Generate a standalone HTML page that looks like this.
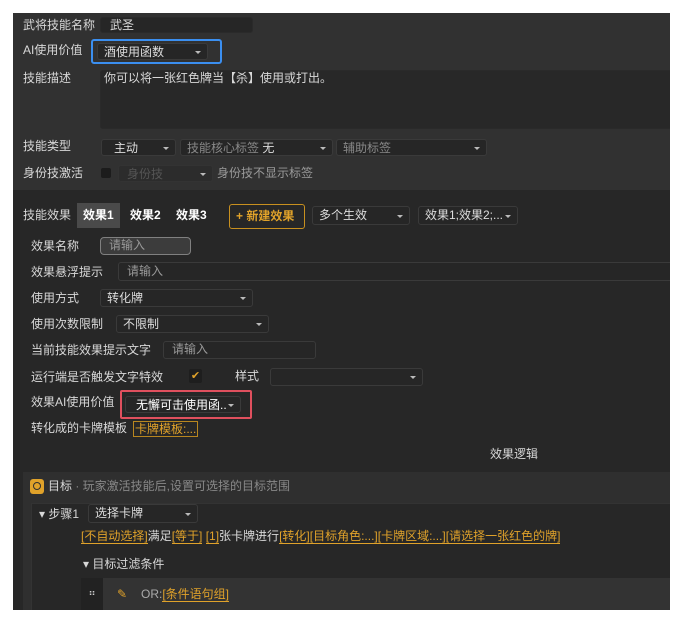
<!DOCTYPE html>
<html><head><meta charset="utf-8"><style>
*{margin:0;padding:0;box-sizing:border-box}
body{width:683px;height:623px;background:#fff;position:relative;overflow:hidden;font-family:"Liberation Sans","Noto Sans CJK SC",sans-serif;font-size:12px;color:#d8d8d8}
#w{position:absolute;left:0;top:0;width:683px;height:623px;clip-path:inset(13px 13px 13px 13px)}
.a{position:absolute;white-space:nowrap}
.l{line-height:14px}
.in{position:absolute;background:#262626;border:1px solid #3a3a3a;border-radius:3px}
.sel{position:absolute;background:#262626;border:1px solid #3a3a3a;border-radius:3px;color:#ddd;padding-left:6px;line-height:16px;white-space:nowrap}
.sel:after{content:"";position:absolute;right:6px;top:50%;margin-top:-1px;border-left:3px solid transparent;border-right:3px solid transparent;border-top:3px solid #bbb}
.g{color:#e0a22a}
.gb{color:#e0a22a;border-bottom:1px solid #e0a22a}
.dim{color:#888}
</style></head><body><div id="w">
<div class="a" style="left:13px;top:13px;width:657px;height:177px;background:#313131"></div>
<div class="a" style="left:13px;top:190px;width:657px;height:420px;background:#272727"></div>

<div class="a l" style="left:23px;top:18px">武将技能名称</div>
<div class="in" style="left:100px;top:17px;width:153px;height:16px;border-color:#2a2a2a"></div>
<div class="a l" style="left:110px;top:18px">武圣</div>

<div class="a l" style="left:23px;top:43px">AI使用价值</div>
<div class="a" style="left:91px;top:39px;width:131px;height:25px;border:2px solid #3b8ff0;border-radius:3px"></div>
<div class="sel" style="left:97px;top:43px;width:111px;height:17px">酒使用函数</div>

<div class="a l" style="left:23px;top:71px">技能描述</div>
<div class="in" style="left:100px;top:70px;width:575px;height:59px;border-color:#2a2a2a;background:#282828"></div>
<div class="a l" style="left:104px;top:71px">你可以将一张红色牌当【杀】使用或打出。</div>

<div class="a l" style="left:23px;top:139px">技能类型</div>
<div class="sel" style="left:101px;top:139px;width:75px;height:17px;padding-left:12px">主动</div>
<div class="sel" style="left:180px;top:139px;width:153px;height:17px"><span class="dim">技能核心标签</span> 无</div>
<div class="sel" style="left:336px;top:139px;width:151px;height:17px"><span class="dim">辅助标签</span></div>

<div class="a l" style="left:23px;top:166px">身份技激活</div>
<div class="a" style="left:101px;top:168px;width:10px;height:10px;background:#1c1c1c;border-radius:2px"></div>
<div class="sel" style="left:118px;top:165px;width:95px;height:17px;color:#555;background:#2c2c2c;border-color:#333;padding-left:8px">身份技</div>
<div class="a l" style="left:217px;top:166px;color:#999">身份技不显示标签</div>

<div class="a l" style="left:23px;top:208px">技能效果</div>
<div class="a" style="left:77px;top:203px;width:43px;height:25px;background:#4a4a4a"></div>
<div class="a l" style="left:83px;top:208px;color:#fff;font-weight:bold">效果1</div>
<div class="a l" style="left:130px;top:208px;color:#fff;font-weight:bold">效果2</div>
<div class="a l" style="left:176px;top:208px;color:#fff;font-weight:bold">效果3</div>
<div class="a" style="left:229px;top:204px;width:76px;height:25px;border:1px solid #c8901f;border-radius:3px;color:#e0a22a;line-height:22px;padding-left:6px;font-weight:bold">+ 新建效果</div>
<div class="sel" style="left:312px;top:206px;width:98px;height:19px;line-height:16px">多个生效</div>
<div class="sel" style="left:418px;top:206px;width:100px;height:19px;padding-left:6px;padding-right:12px;overflow:hidden">效果1;效果2;...</div>

<div class="a l" style="left:31px;top:239px">效果名称</div>
<div class="a" style="left:100px;top:237px;width:91px;height:18px;background:#3c3c3c;border:1px solid #808080;border-radius:4px;color:#999;padding-left:8px;line-height:15px">请输入</div>

<div class="a l" style="left:31px;top:265px">效果悬浮提示</div>
<div class="in" style="left:118px;top:262px;width:560px;height:19px;color:#999;padding-left:8px;line-height:16px">请输入</div>

<div class="a l" style="left:31px;top:291px">使用方式</div>
<div class="sel" style="left:100px;top:289px;width:153px;height:18px">转化牌</div>

<div class="a l" style="left:31px;top:317px">使用次数限制</div>
<div class="sel" style="left:116px;top:315px;width:153px;height:18px">不限制</div>

<div class="a l" style="left:31px;top:343px">当前技能效果提示文字</div>
<div class="in" style="left:163px;top:341px;width:153px;height:18px;color:#999;padding-left:8px;line-height:15px">请输入</div>

<div class="a l" style="left:31px;top:370px">运行端是否触发文字特效</div>
<div class="a" style="left:189px;top:369px;width:13px;height:14px;background:#1e1e1e;border-radius:2px;color:#e0a22a;font-size:11px;line-height:14px;text-align:center">✔</div>
<div class="a l" style="left:235px;top:369px">样式</div>
<div class="sel" style="left:270px;top:368px;width:153px;height:18px"></div>

<div class="a l" style="left:31px;top:395px">效果AI使用价值</div>
<div class="a" style="left:120px;top:390px;width:132px;height:29px;border:2px solid #e0505e;border-radius:2px"></div>
<div class="sel" style="left:125px;top:396px;width:116px;height:17px;padding-left:10px;color:#fff"><span style="display:inline-block;width:92px;overflow:hidden;vertical-align:top">无懈可击使用函..</span></div>

<div class="a l" style="left:31px;top:421px">转化成的卡牌模板</div>
<div class="a l gb" style="left:133px;top:421px;border:1px solid #b8861f;padding:0 1px">卡牌模板:...</div>

<div class="a l" style="left:490px;top:447px">效果逻辑</div>

<div class="a" style="left:23px;top:472px;width:650px;height:138px;background:#2f2f2f"></div>
<div class="a" style="left:30px;top:479px;width:14px;height:15px;background:#e0a22a;border-radius:3px"></div>
<div class="a" style="left:33px;top:482px;width:8px;height:8px;border:1.5px solid #2f2f2f;border-radius:50%"></div>
<div class="a l" style="left:48px;top:479px">目标 <span class="dim">· 玩家激活技能后,设置可选择的目标范围</span></div>
<div class="a" style="left:31px;top:503px;width:645px;height:110px;background:#272727;border:1px solid #333"></div>
<div class="a l" style="left:39px;top:507px">▾ 步骤1</div>
<div class="sel" style="left:88px;top:504px;width:110px;height:19px;padding-left:6px">选择卡牌</div>
<div class="a l" style="left:81px;top:529px"><span class="gb">[不自动选择]</span>满足<span class="gb">[等于]</span> <span class="gb">[1]</span>张卡牌进行<span class="gb">[转化]</span><span class="gb">[目标角色:...]</span><span class="gb">[卡牌区域:...]</span><span class="gb">[请选择一张红色的牌]</span></div>
<div class="a l" style="left:83px;top:557px">▾ 目标过滤条件</div>
<div class="a" style="left:81px;top:578px;width:595px;height:32px;background:#333"></div>
<div class="a" style="left:81px;top:578px;width:22px;height:32px;background:#222;color:#ccc;font-size:10px;text-align:center;line-height:32px">⠶</div>
<div class="a l g" style="left:117px;top:587px">✎</div>
<div class="a l" style="left:141px;top:587px;color:#aaa">OR:<span class="gb">[条件语句组]</span></div>
</div></body></html>
